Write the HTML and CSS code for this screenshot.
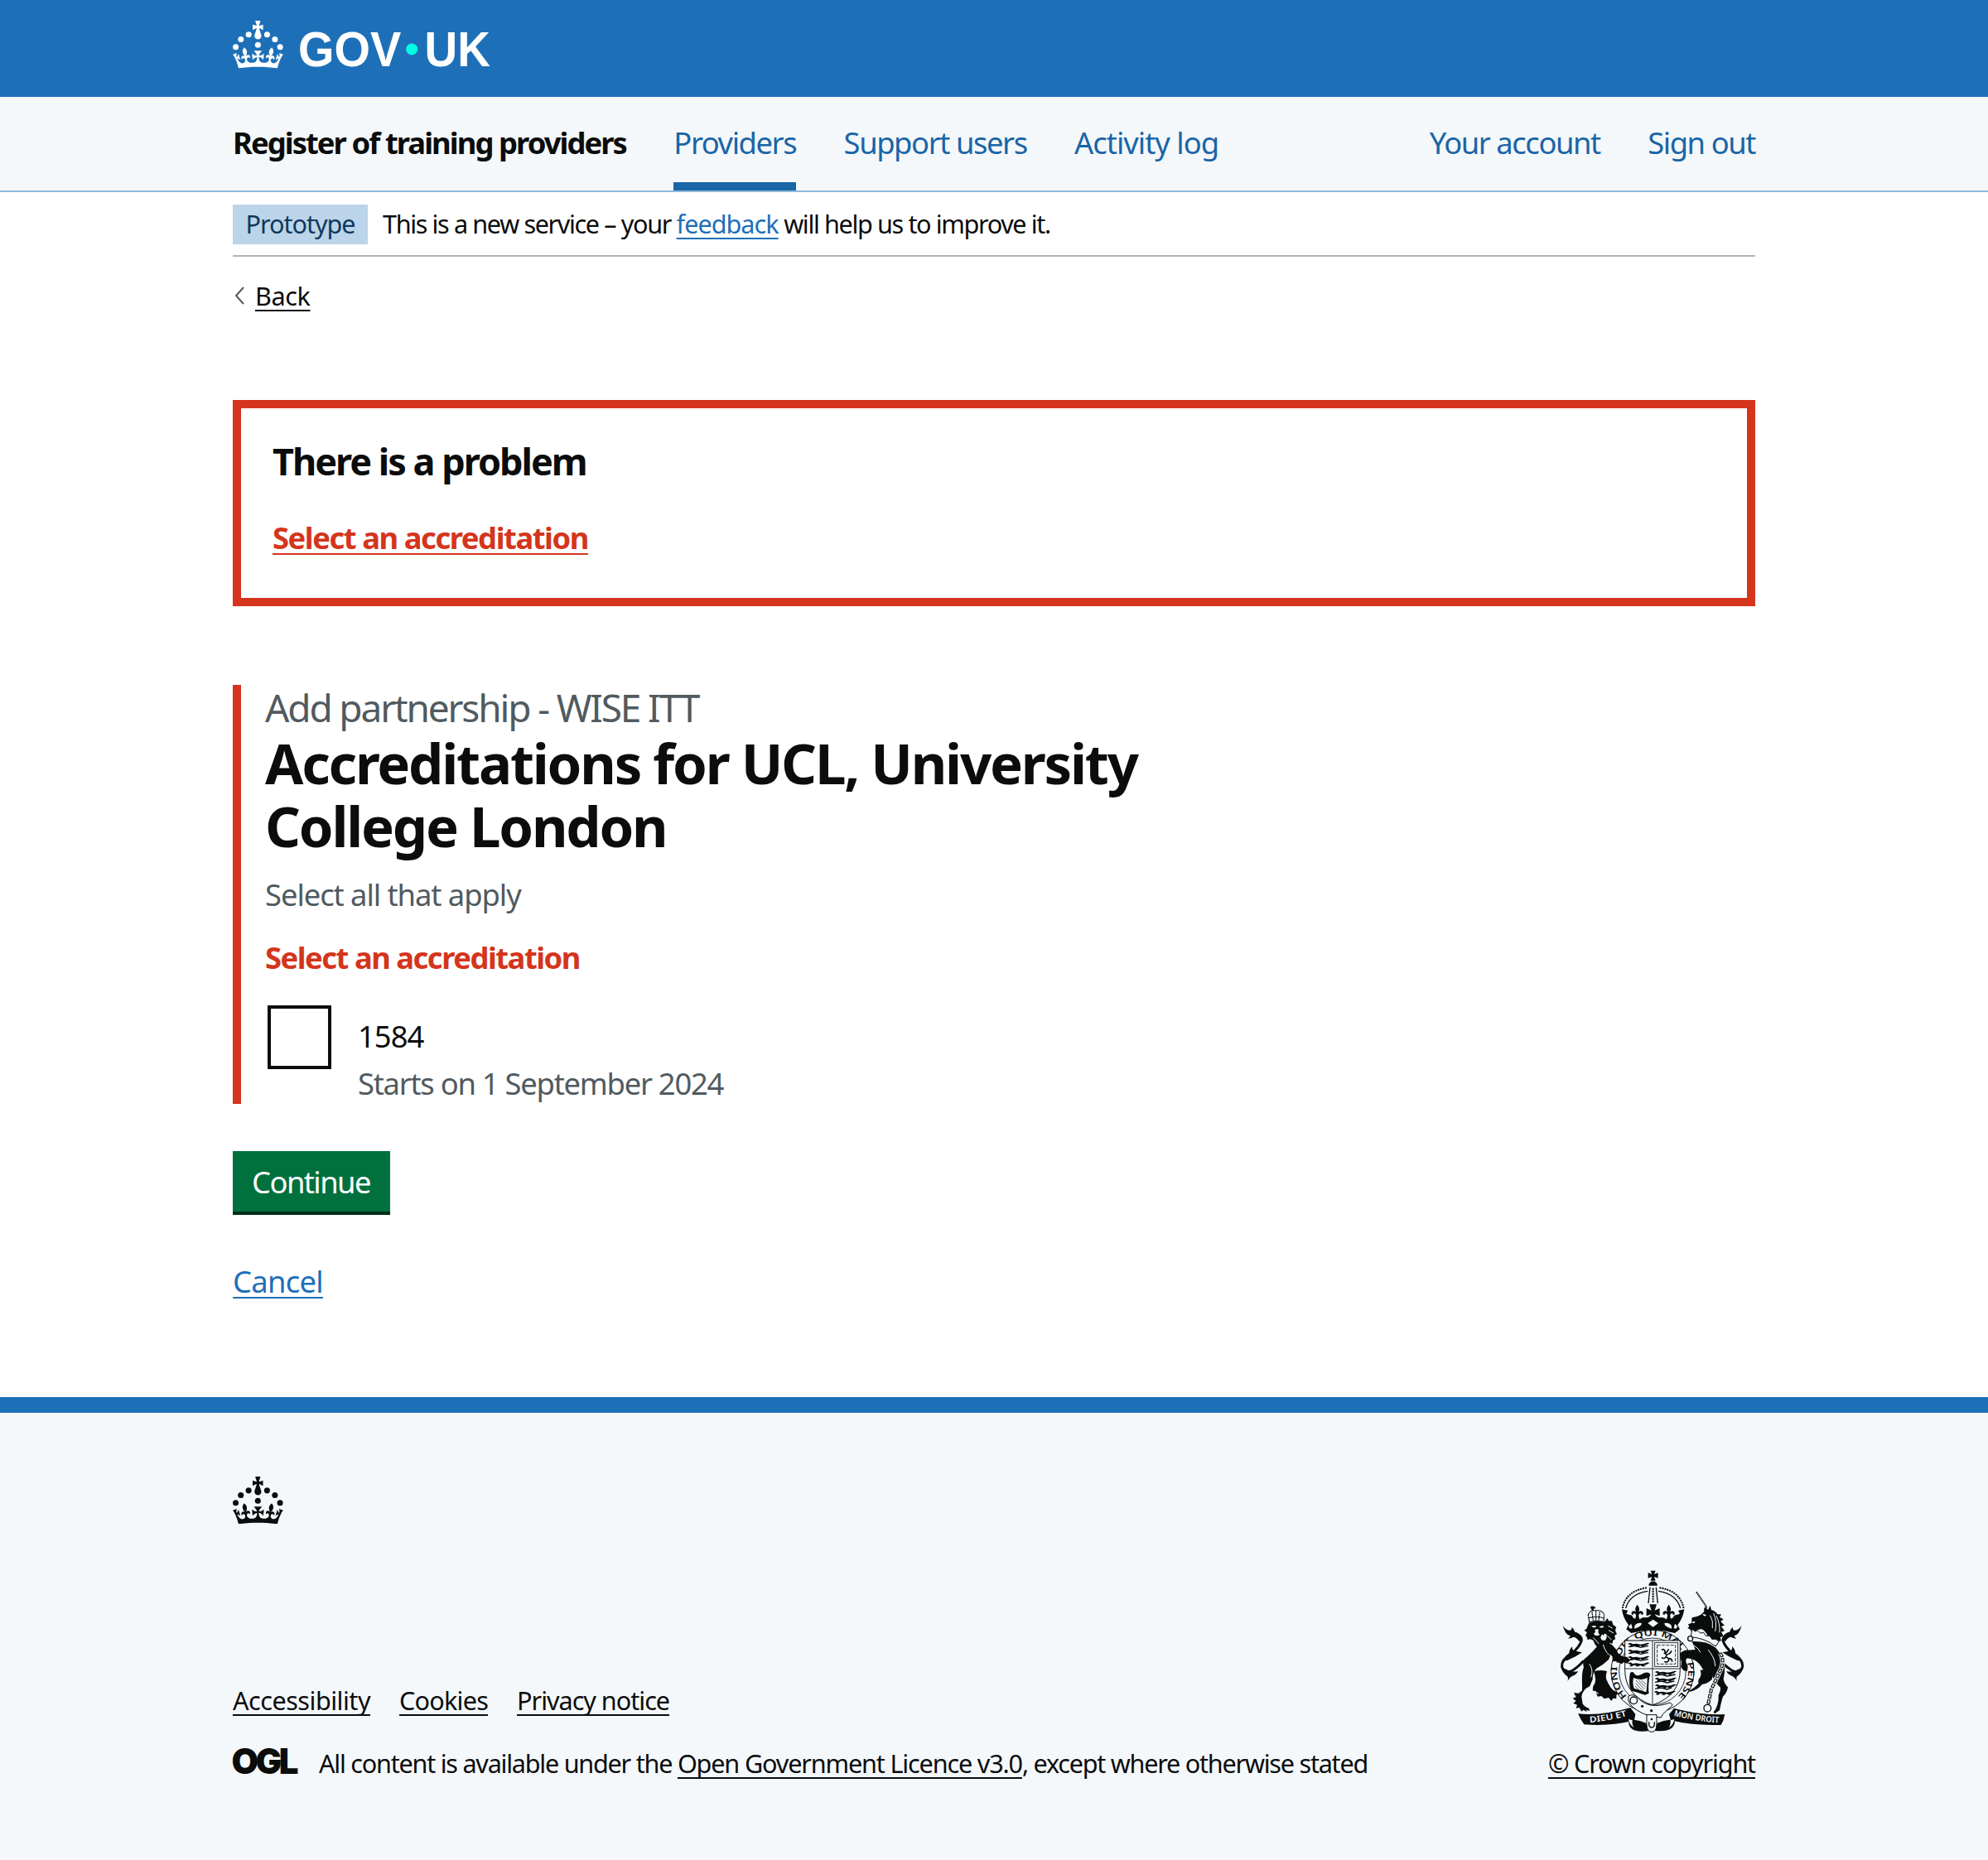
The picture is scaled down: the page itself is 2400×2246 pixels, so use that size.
FILE: index.html
```html
<!DOCTYPE html>
<html lang="en">
<head>
<meta charset="utf-8">
<title>Accreditations for UCL, University College London - Register of training providers</title>
<link rel="stylesheet" href="styles.css">
</head>
<body>
<svg class="defs" width="0" height="0" aria-hidden="true">
  <symbol id="crown" viewBox="0 0 64 60">
    <circle cx="20" cy="17.6" r="3.7"/><circle cx="10.2" cy="23.5" r="3.7"/><circle cx="3.7" cy="33.2" r="3.7"/><circle cx="31.7" cy="30.6" r="3.7"/><circle cx="43.3" cy="17.6" r="3.7"/><circle cx="53.2" cy="23.5" r="3.7"/><circle cx="59.7" cy="33.2" r="3.7"/>
    <path d="M33.1,9.8c.2-.1.3-.3.5-.5l4.6,2.4v-6.8l-4.6,1.5c-.1-.2-.3-.3-.5-.5l1.9-5.9h-6.7l1.9,5.9c-.2.1-.3.3-.5.5l-4.6-1.5v6.8l4.6-2.4c.1.2.3.3.5.5l-2.6,8c-.9,2.8,1.2,5.7,4.1,5.7h0c3,0,5.1-2.9,4.1-5.7l-2.6-8ZM37,37.9s-3.4,3.8-4.1,6.1c2.2,0,4.2-.5,6.4-2.8l-.7,8.5c-2-2.8-4.4-4.1-5.7-3.8.1,3.1.5,6.7,5.8,7.2,3.7.3,6.7-1.5,7-3.8.4-2.6-2-4.3-3.7-1.6-1.4-4.5,2.4-6.1,4.9-3.2-1.9-4.5-1.8-7.7,2.4-10.9,3,4,2.6,7.3-1.2,11.1,2.4-1.3,6.2,0,4,4.6-1.2-2.8-3.7-2.2-4.2.2-.3,1.7.7,3.7,3,4.2,1.9.3,4.7-.9,7-5.9-1.3,0-2.4.7-3.9,1.7l2.4-8c.6,2.3,1.4,3.7,2.2,4.5.6-1.6.5-2.8,0-5.3l5,1.8c-2.6,3.6-5.2,8.7-7.3,17.5-7.4-1.1-15.7-1.7-24.5-1.7h0c-8.8,0-17.1.6-24.5,1.7-2.1-8.9-4.7-13.9-7.3-17.5l5-1.8c-.5,2.5-.6,3.7,0,5.3.8-.8,1.6-2.3,2.2-4.5l2.4,8c-1.5-1-2.6-1.7-3.9-1.7,2.3,5,5.2,6.2,7,5.9,2.3-.4,3.3-2.4,3-4.2-.5-2.4-3-3.1-4.2-.2-2.2-4.6,1.6-6,4-4.6-3.7-3.7-4.2-7.1-1.2-11.1,4.2,3.2,4.3,6.4,2.4,10.9,2.5-2.8,6.3-1.3,4.9,3.2-1.8-2.7-4.1-1-3.7,1.6.3,2.3,3.3,4.1,7,3.8,5.4-.5,5.7-4.2,5.8-7.2-1.3-.2-3.7,1-5.7,3.8l-.7-8.5c2.2,2.3,4.2,2.7,6.4,2.8-.7-2.3-4.1-6.1-4.1-6.1h10.6,0Z"/>
  </symbol>
</svg>

<header class="header">
  <div class="container">
    <svg class="logo" viewBox="0 0 324 60" role="img" aria-label="GOV.UK">
      <use href="#crown" width="64" height="60"/>
      <text class="logo-text" x="82.5" y="58" textLength="130" lengthAdjust="spacingAndGlyphs">GOV</text>
      <circle class="logo-dot" cx="226" cy="36" r="7.3"/>
      <text class="logo-text" x="242" y="58" textLength="83" lengthAdjust="spacingAndGlyphs">UK</text>
    </svg>
  </div>
</header>

<nav class="service">
  <div class="container service-row">
    <span class="service-name">Register of training providers</span>
    <a class="service-link active" href="#">Providers</a>
    <a class="service-link" href="#">Support users</a>
    <a class="service-link activity" href="#">Activity log</a>
    <a class="service-link push" href="#">Your account</a>
    <a class="service-link" href="#">Sign out</a>
  </div>
</nav>

<div class="container">
  <div class="phase">
    <strong class="tag">Prototype</strong>
    <span class="phase-text">This is a new service – your <a class="link feedback" href="#">feedback</a> will help us to improve it.</span>
  </div>
  <a class="back" href="#">
    <svg class="chevron" viewBox="0 0 12 22"><path d="M11 1 2 11l9 10"/></svg>
    <span class="back-text">Back</span>
  </a>

  <main>
    <div class="error-summary">
      <h2 class="error-title">There is a problem</h2>
      <a class="error-link" href="#">Select an accreditation</a>
    </div>

    <div class="form-group">
      <span class="caption">Add partnership - WISE ITT</span>
      <h1 class="heading">Accreditations for UCL, University<br>College London</h1>
      <p class="hint">Select all that apply</p>
      <p class="error-message">Select an accreditation</p>
      <div class="checkbox-row">
        <span class="checkbox"></span>
        <div class="checkbox-text">
          <span class="label">1584</span>
          <span class="label-hint">Starts on 1 September 2024</span>
        </div>
      </div>
    </div>

    <button class="button">Continue</button>
    <div class="cancel"><a class="link" href="#">Cancel</a></div>
  </main>
</div>

<footer class="footer">
  <div class="container">
    <svg class="footer-crown" viewBox="0 0 64 60"><use href="#crown" width="64" height="60"/></svg>
    <div class="footer-meta">
      <div class="footer-main">
        <div class="footer-links">
          <a class="accessibility" href="#">Accessibility</a>
          <a class="cookies" href="#">Cookies</a>
          <a class="privacy" href="#">Privacy notice</a>
        </div>
        <div class="licence">
          <svg class="ogl" viewBox="0 0 78 33" role="img" aria-label="OGL"><text class="ogl-text" x="-1.5" y="31.5" textLength="81" lengthAdjust="spacing">OGL</text></svg>
          <span class="licence-text">All content is available under the <a href="#">Open Government Licence v3.0</a>, except where otherwise stated</span>
        </div>
      </div>
      <div class="copyright">
        <svg class="arms" viewBox="69 48 670 588">
          <defs>
            <path id="garter-path" d="M313 505A129 129 0 1 1 497 505"/>
            <path id="dieu" d="M178 600Q250 594 316 575"/>
            <path id="mon" d="M482 575Q560 596 648 601"/>
            <path id="lion-passant" d="M0 4l10-4 8 5 14-2 14 3 14-2 12-4 8 2-7 3-5 4-10 1 8 4-12 1-8-4-8 4-10 0 4-4-10-1-6 5-10-1 6-5z"/>
            <g id="tail">
              <path class="tail-stem" d="M118 274Q150 284 148 303 140 328 112 350 74 372 77 398 84 425 110 414 130 405 156 376"/>
              <path d="M80 248q10 18 28 18 6-6 5-12 10 10 10 18 22 4 28 28l-12 6q-8-14-20-16-14 8-20 4 8-2 8-8-18-4-27-38zM150 346q-22 16-52 28l-16 4q4-18 20-28 2-16 12-26 0 12 4 16zM76 400q0 20 22 34 2 8 0 16 6-14 16-18 14-4 22-18-20 4-34-2z"/>
            </g>
            <path id="fleur" d="M0-30q12 14 5 26 10-8 16 2 2 8-6 10 2-6-4-6-6 0-6 10l4 14h-18l4-14q0-10-6-10-6 0-4 6-8-2-6-10 6-10 16-2-7-12 5-26z"/>
          </defs>

          <!-- royal crown -->
          <path d="M398 50h18l-5 13 14-6v20l-14-5 5 14h-18l5-14-14 5V57l14 6z"/>
          <path d="M391 104a16 16 0 1 1 32 0z"/>
          <path class="line" d="M396 110l-6 58M418 110l6 58"/>
          <path class="beads" d="M407 116v48"/>
          <path class="beads" d="M297 183Q310 124 382 112M517 183Q504 124 432 112"/>
          <path class="line" d="M308 186Q322 134 388 124M506 186Q492 134 426 124"/>
          <path d="M394 172h26l-7 22 18-8v28l-18-6q10 16 28 10l6 16h-80l6-16q18 6 28-10l-18 6v-28l18 8z"/>
          <use href="#fleur" x="350" y="203"/><use href="#fleur" x="464" y="203"/>
          <path d="M294 190l22 4-6 12 12 4q10 0 12 10 20 14 34 0 16 10 39 8 23 2 39-8 14 14 34 0 2-10 12-10l12-4-6-12 22-4q-4 32-24 56l8 16-18 14q-79-22-158 0l-18-14 8-16q-20-24-24-56z"/>
          <path class="knock" d="M340 250q8-14 26-10 0 12-26 20zM388 240l19-13 19 13-19 14zM474 250q-8-14-26-10 0 12 26 20zM318 252l10-10 4 16-8 2zM496 252l-10-10-4 16 8 2z"/>

          <!-- garter -->
          <circle class="garter" cx="405" cy="415" r="150"/>
          <text class="garter-text"><textPath href="#garter-path" textLength="606" lengthAdjust="spacingAndGlyphs">HONI SOIT QUI MAL Y PENSE</textPath></text>
          <circle class="line thin" cx="405" cy="415" r="121"/>

          <!-- shield -->
          <path class="shield" d="M305 303h200v106q0 94-100 128-100-34-100-128z"/>
          <path class="line thin" d="M405 303v234M305 405h200"/>
          <use href="#lion-passant" x="315" y="311"/><use href="#lion-passant" x="315" y="335"/><use href="#lion-passant" x="315" y="359"/><use href="#lion-passant" x="315" y="382"/>
          <path class="squiggle" d="M318 326l24-4 20 6 28-6M318 350l24-4 20 6 28-6M318 374l24-4 20 6 28-6"/>
          <rect class="line thin" x="413" y="311" width="84" height="86"/>
          <rect class="line thin dashed" x="422" y="320" width="66" height="68"/>
          <path class="rampant" d="M438 338q10-8 12 4t14-8M446 348q14 4 8 14t-16 2M456 354q14-2 18-14M454 362q10 4 10 12t-16 6M464 368q12 0 12 12"/>
          <use href="#lion-passant" x="413" y="413"/><use href="#lion-passant" x="413" y="437"/><use href="#lion-passant" x="413" y="461"/><use href="#lion-passant" x="410" y="485"/>
          <path class="squiggle" d="M414 430l24-4 20 6 30-6M414 454l24-4 20 6 26-6M414 478l24-4 20 6 16-6"/>
          <path d="M324 420q10-8 16 4 6 10 24 2 16-10 28-6 8 6 2 14-6 40-2 60l-14 6q-30-10-48-14l-6-10q-6-24 0-56zM336 438q-4 22 2 38l44 14q4-20 4-52-22 12-50 0z" fill-rule="evenodd"/>
          <path class="harp" d="M344 446l32 34M344 458l26 28M354 446l26 26M364 446l18 16M342 468l16 16"/>

          <!-- lion supporter -->
          <use href="#tail"/>
          <path class="small-crown" d="M172 210l4 26q28-8 52 0l2-26M172 210q6-18 28-16 24-2 30 16M200 194v38M186 200l4 30M214 200l-4 30M174 222q28-10 54 0"/>
          <path d="M184 176l4 4 4-4v6l6-2v8l-6-2v8h-8v-8l-4 2v-8l4 2z"/>
          <path d="M174 240q26-12 56-4l12-14 4 10 12 0 4 14 12 8-4 12 6 14-8 4 2 14-8 4-2 12-10-2-2 12-8-6-8 12-8 8-14-4-14-18-6-14-10-4-10 2-4-12-4-4 6-10-10-8 8-6z"/>
          <path class="knock" d="M184 252q10-6 18 0-8 8-18 0zM212 254q8-8 18-2-8 8-18 2zM196 264q8-4 14 0l-2 10 6 8-8 4-10-2-4-6 6-6zM218 288l4-8 6 6 2-8 8 2q4 12-4 22h-10q-10-6-6-14z"/>
          <path class="wline" d="M244 250l16 8M246 266l18 10M242 286l14 14M190 292l22 24"/>
          <path d="M206 316q30-10 52 2 16 14 24 34 16 12 30 10l12 12-10 12-14-4-6 6-18-8-12-6-10-20-8 18q-20 20-44 32-14 12-14 40l-10 24q-28 14-30 38l4 26q6 12 22 16l4 10-14-4 4 8-14-8-6 6-8-14-12 2 4-12-14-6 10-8-12-10 12-4-8-16 18 2 12-10 0-26q-2-40 6-58-8-26 10-36 24-22 44-46z"/>
          <path d="M192 414q28-6 48 0-8 26 2 38 8 20 20 30l18 10-6 10 0 12-12-2-6 10-10-12-16 4-10-10-14 2-6-18-12-4 2-16 6-10q6-16-4-44z"/>
          <path class="wline" d="M226 318q10 34 34 44M176 388q16 20 6 48M196 486l14 10"/>

          <!-- unicorn supporter -->
          <use href="#tail" transform="matrix(-1 0 0 1 808 0)"/>
          <path class="horn" d="M564 127l38 56"/>
          <path d="M548 220q30-4 44-22-2-12 4-18l10 12 8-16 4 16q16 4 22 16l14 0-6 10 14 8-10 8 14 14-12 4 12 16-12 4 8 14-12 6 4 12-14 2 0 12q-16-10-34-30-8-18-22-26-18 0-24 10l-12 0-8-10-8-4 6-6-4-8 12-4z"/>
          <path class="knock" d="M586 208q8-4 14 4-8 6-14-4zM544 236l16-3-4 8z"/>
          <path class="wline" d="M626 204q14 30 6 66M614 212q12 20 8 46M636 214q14 26 12 60"/>
          <path class="collar" d="M548 262l12 8 8-4 10 10 12-2 8 12 14 0 8 12 14 0 12 8-12 18q-40-30-90-34z"/>
          <circle class="ring" cx="542" cy="296" r="9"/>
          <path d="M548 306q52-2 78 18 10 4 18 18 20 26 22 44 2 30-4 56 2 16 16 30-2 20-18 34-6 18-12 50l-18 12-4-6q20-24 18-62 10-18 6-28-18-16-28-40-26-8-34-24-12-24-30-34-18-8-30-6-6 12 4 24 2 14-2 22l-12-2-10-12 2-20q-6-14-6-30 14-14 30-12 16-2 26-2z"/>
          <path d="M578 410q26-4 42 4 6 12 0 30-16 16-36 18-14 20-42 26l-6-2q22-12 36-28-4-12 4-20 8-10 2-28z"/>
          <path class="wline" d="M550 320q20 6 28 26M606 336q26 30 26 60"/>
          <path class="chain-back" d="M650 348q20 30-4 72l-28 60-12 56"/>
          <path class="chain" d="M650 348q20 30-4 72l-28 60-12 56"/>
          <path class="chain-hole" d="M650 348q20 30-4 72l-28 60-12 56"/>
          <circle class="ring" cx="604" cy="548" r="13"/>

          <!-- ribbon and motto -->
          <path d="M135 568q90 8 190-22l18 24-4 22q-80 22-182 15l-10-16z"/>
          <path d="M667 570q-90 4-184-22l-18 22 6 22q80 20 182 17l8-16z"/>
          <text class="motto"><textPath href="#dieu" textLength="137" lengthAdjust="spacingAndGlyphs">DIEU ET</textPath></text>
          <text class="motto"><textPath href="#mon" textLength="166" lengthAdjust="spacingAndGlyphs">MON DROIT</textPath></text>
          <path class="shield" d="M318 504q20-10 34 6 40 46 116 18l10 8-36 34-6 12q-50-2-86-26-40-24-32-52z"/>
          <circle cx="368" cy="541" r="5"/><circle cx="401" cy="557" r="5"/>
          <circle class="line" cx="337" cy="520" r="13"/>
          <path d="M320 590h18q20 2 44 12l12 28q-44 6-62-6-18-14-12-34zM484 590h-18q-20 2-44 12l-10 28q44 4 60-8 18-14 12-32z"/>
          <path class="knock" d="M318 588l14 4q-2 16 6 26-16-8-20-30zM484 588l-14 4q2 16-6 26 16-8 20-30z"/>
          <path class="shield" d="M384 572h36v34q0 28-18 28t-18-28z"/>
          <path class="line" d="M392 598v6q0 14 10 14t10-14v-6"/><circle cx="402" cy="588" r="4"/>
        </svg>
        <a class="crown-copyright" href="#">© Crown copyright</a>
      </div>
    </div>
  </div>
</footer>
</body>
</html>
```
FILE: styles.css
```css
* { box-sizing: border-box; }
body { margin: 0; background: #fff; color: #0b0c0c; font-family: "Noto Sans", sans-serif; font-size: 36.4px; line-height: 48px; white-space: nowrap; }
h1, h2, p { margin: 0; }
a { color: inherit; text-decoration-thickness: 2px; text-underline-offset: 5px; text-decoration-skip-ink: none; }
.defs { display: block; position: absolute; }
.container { width: 1838px; margin: 0 auto; }

.header { height: 117px; background: #1d70b8; color: #fff; padding-top: 25px; }
.logo { display: block; width: 310px; height: 57.4px; fill: #fff; overflow: visible; }
.logo-text { font: bold 61px "Liberation Sans", sans-serif; }
.logo-dot { fill: #00ffe0; }

.service { background: #f4f8fb; border-bottom: 2px solid #8eb8dc; }
.service-row { display: flex; gap: 57.4px; height: 113px; }
.service-name, .service-link { padding-top: 30.6px; }
.service-name { font-weight: bold; letter-spacing: -1.95px; }
.service-link { color: #1a65a6; text-decoration: none; letter-spacing: -1.44px; }
.activity { letter-spacing: -1px; }
.active { border-bottom: 10px solid #1a65a6; }
.push { margin-left: auto; }

.phase { display: flex; align-items: center; gap: 18px; padding: 15px 0 13px; border-bottom: 2px solid #b1b4b6; font-size: 30.6px; line-height: 38px; }
.phase-text { margin-top: -2px; letter-spacing: -1.37px; }
.tag { padding: 4px 15.5px 6px; background: #bbd4ea; color: #0f385c; font-weight: normal; letter-spacing: -1.035px; }
.link { color: #1d70b8; }
.feedback { letter-spacing: -.98px; }
.back { display: flex; align-items: center; gap: 13px; margin-top: 28px; padding-left: 2px; font-size: 30.6px; line-height: 38px; text-decoration: none; letter-spacing: -.4px; }
.back-text { text-decoration: underline 2px; text-underline-offset: 5px; }
.chevron { width: 12px; height: 22px; fill: none; stroke: #505a5f; stroke-width: 2; }

.error-summary { margin-top: 106.5px; height: 249.5px; border: 10px solid #d4351c; padding: 35.5px 38px; }
.error-title { font-size: 45px; line-height: 57px; margin-bottom: 39.5px; letter-spacing: -2px; }
.error-link { color: #d4351c; font-weight: bold; letter-spacing: -1.454px; }

.form-group { margin-top: 95px; height: 506px; border-left: 10px solid #d4351c; padding-left: 29px; }
.caption { display: block; padding-top: 1px; color: #505a5f; font-size: 46px; line-height: 53px; letter-spacing: -2.15px; }
.heading { margin-top: 1.5px; font-size: 67px; line-height: 76.5px; letter-spacing: -2.2px; }
.hint { margin-top: 20px; color: #505a5f; letter-spacing: -1.06px; }
.error-message { margin-top: 28.5px; color: #d4351c; font-weight: bold; letter-spacing: -1.5px; }
.checkbox-row { display: flex; gap: 32px; margin-top: 34px; padding-left: 3px; }
.checkbox { width: 77px; height: 77px; border: 4px solid #0b0c0c; }
.checkbox-text { display: flex; flex-direction: column; gap: 9px; padding-top: 13px; }
.label { letter-spacing: -1px; }
.label-hint { color: #505a5f; letter-spacing: -1.27px; }
.button { display: block; margin-top: 57px; width: 190px; height: 73px; padding: 0 0 0 23px; border: 0; background: #00703c; box-shadow: 0 4px 0 #002d18; color: #fff; font: inherit; letter-spacing: -1.57px; text-align: left; }
.cancel { margin-top: 60px; height: 47px; letter-spacing: -.716px; }

.footer { margin-top: 117px; height: 559px; border-top: 19px solid #1d70b8; background: #f4f8fb; padding-top: 77px; font-size: 30.6px; line-height: 38px; }
.footer-crown { display: block; width: 61.2px; height: 57.4px; fill: #0b0c0c; }
.footer-meta { display: flex; justify-content: space-between; align-items: flex-end; margin-top: 56px; height: 252px; }
.footer-links { display: flex; gap: 35px; margin-bottom: 38px; }
.accessibility { letter-spacing: -.5px; }
.cookies { letter-spacing: -.786px; }
.privacy { letter-spacing: -1.02px; }
.licence { display: flex; align-items: flex-start; gap: 26px; }
.licence-text { letter-spacing: -1.245px; }
.licence-text a { letter-spacing: -1.161px; }
.ogl { width: 78px; height: 33px; overflow: visible; fill: #0b0c0c; }
.ogl-text { font: 900 42px Inter, sans-serif; }
.copyright { display: flex; flex-direction: column; align-items: flex-end; gap: 18.5px; }
.crown-copyright { letter-spacing: -1.169px; }

/* royal coat of arms */
.arms { width: 223.3px; height: 196px; margin-right: 13px; fill: #0b0c0c; }
.arms .knock { fill: #f4f8fb; }
.arms .line { fill: none; stroke: #0b0c0c; stroke-width: 4; }
.arms .thin { stroke-width: 2.5; }
.arms .dashed { stroke-dasharray: 12 4; }
.arms .beads { fill: none; stroke: #0b0c0c; stroke-width: 7; stroke-linecap: round; stroke-dasharray: 0 9; }
.arms .garter, .arms .shield, .arms .collar { fill: #f4f8fb; stroke: #0b0c0c; stroke-width: 3; }
.arms .garter-text { font: 600 31px "Noto Sans", sans-serif; }
.arms .harp { stroke: #0b0c0c; stroke-width: 2; fill: none; }
.arms .squiggle { stroke: #0b0c0c; stroke-width: 4; fill: none; }
.arms .rampant { stroke: #0b0c0c; stroke-width: 5; fill: none; }
.arms .small-crown { fill: none; stroke: #0b0c0c; stroke-width: 4; stroke-dasharray: 5 1.5; }
.arms .wline { fill: none; stroke: #f4f8fb; stroke-width: 3; }
.arms .horn { stroke: #0b0c0c; stroke-width: 6; stroke-dasharray: 5 2; }
.arms .tail-stem { fill: none; stroke: #0b0c0c; stroke-width: 9; }
.arms .chain-back { fill: none; stroke: #f4f8fb; stroke-width: 17; }
.arms .chain { fill: none; stroke: #0b0c0c; stroke-width: 12; stroke-dasharray: 16 4; }
.arms .chain-hole { fill: none; stroke: #f4f8fb; stroke-width: 5; stroke-dasharray: 10 10; stroke-dashoffset: -3; }
.arms .ring { fill: #f4f8fb; stroke: #0b0c0c; stroke-width: 4; }
.arms .motto { font: 600 30px "Noto Sans", sans-serif; fill: #f4f8fb; }
```
